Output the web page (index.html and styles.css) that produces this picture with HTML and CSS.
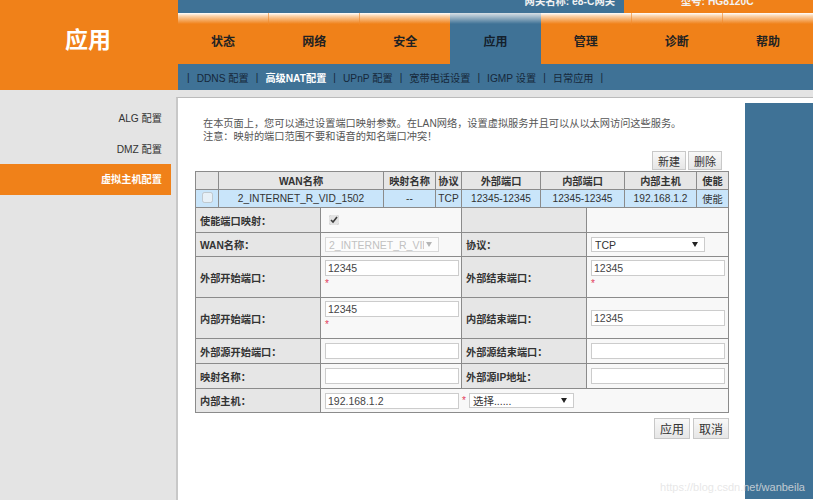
FILE: index.html
```html
<!DOCTYPE html>
<html lang="zh-CN">
<head>
<meta charset="utf-8">
<title>应用</title>
<link rel="stylesheet" href="styles.css">
</head>
<body>
<div class="page">
  <header class="header">
    <div class="brand">应用</div>
    <div class="head-right">
      <div class="topbar">
        <div class="gw">网关名称: e8-C网关</div>
        <div class="model">型号: HG8120C</div>
      </div>
      <nav class="tabs">
        <a class="tab">状态</a><a class="tab">网络</a><a class="tab">安全</a><a class="tab active">应用</a><a class="tab">管理</a><a class="tab">诊断</a><a class="tab">帮助</a>
      </nav>
      <div class="subnav">
        <span class="sep">|</span><span>DDNS 配置</span><span class="sep">|</span><span class="cur">高级NAT配置</span><span class="sep">|</span><span>UPnP 配置</span><span class="sep">|</span><span>宽带电话设置</span><span class="sep">|</span><span>IGMP 设置</span><span class="sep">|</span><span>日常应用</span><span class="sep">|</span>
      </div>
    </div>
  </header>
  <div class="body">
    <aside class="side">
      <div class="side-item">ALG 配置</div>
      <div class="side-item">DMZ 配置</div>
      <div class="side-item on">虚拟主机配置</div>
    </aside>
    <main class="main">
      <div class="intro">
        <p>在本页面上，您可以通过设置端口映射参数。在LAN网络，设置虚拟服务并且可以从以太网访问这些服务。</p>
        <p>注意：映射的端口范围不要和语音的知名端口冲突！</p>
      </div>
      <div class="btns top-btns"><button class="btn">新建</button><button class="btn">删除</button></div>
      <table class="list">
        <colgroup><col class="c1"><col class="c2"><col class="c3"><col class="c4"><col class="c5"><col class="c6"><col class="c7"><col class="c8"></colgroup>
        <tr><th></th><th>WAN名称</th><th>映射名称</th><th>协议</th><th>外部端口</th><th>内部端口</th><th>内部主机</th><th>使能</th></tr>
        <tr class="sel"><td><input type="checkbox" class="chk" disabled></td><td>2_INTERNET_R_VID_1502</td><td>--</td><td>TCP</td><td>12345-12345</td><td>12345-12345</td><td>192.168.1.2</td><td>使能</td></tr>
      </table>
      <table class="form">
        <colgroup><col class="f1"><col class="f2"><col class="f3"><col class="f4"></colgroup>
        <tr class="r25"><th>使能端口映射：</th><td class="chkcell"><input type="checkbox" class="chk2" checked></td><th></th><td></td></tr>
        <tr class="r24"><th>WAN名称：</th><td><select class="sel-wan" disabled><option>2_INTERNET_R_VID_1502</option></select></td><th>协议：</th><td><select class="sel-proto"><option>TCP</option></select></td></tr>
        <tr class="r41"><th>外部开始端口：</th><td class="top"><input class="txt" value="12345"><div class="req">*</div></td><th>外部结束端口：</th><td class="top"><input class="txt" value="12345"><div class="req">*</div></td></tr>
        <tr class="r41"><th>内部开始端口：</th><td class="top"><input class="txt" value="12345"><div class="req">*</div></td><th>内部结束端口：</th><td><input class="txt" value="12345"></td></tr>
        <tr class="r25"><th>外部源开始端口：</th><td><input class="txt"></td><th>外部源结束端口：</th><td><input class="txt"></td></tr>
        <tr class="r25"><th>映射名称：</th><td><input class="txt"></td><th>外部源IP地址：</th><td><input class="txt"></td></tr>
        <tr class="r24"><th>内部主机：</th><td colspan="3"><div class="host"><input class="txt host-ip" value="192.168.1.2"><span class="req">*</span><select class="sel-host"><option>选择......</option></select></div></td></tr>
      </table>
      <div class="btns bot-btns"><button class="btn big">应用</button><button class="btn big">取消</button></div>
    </main>
    <div class="rail"></div>
  </div>
  <div class="mark">https://blog.csdn.net/wanbeila</div>
</div>
</body>
</html>
```
FILE: styles.css
```css
* { box-sizing: border-box; }
html, body { margin: 0; padding: 0; }
body { font-family: "Liberation Sans", "Noto Sans CJK SC", sans-serif; font-size: 10.2px; color: #333; background: #fff; }
.page { position: relative; width: 813px; height: 500px; overflow: hidden; }

.header { display: flex; height: 90px; }
.brand { width: 178px; background: #f08119; color: #fff; font-size: 23px; font-weight: 700; padding: 24px 0 0 65px; line-height: 32px; }
.head-right { flex: 1; display: flex; flex-direction: column; }
.topbar { display: flex; height: 13px; overflow: hidden; background: #3f7296; color: #f2f2f2; font-size: 10.3px; font-weight: 700; line-height: 3px; }
.gw { width: 446px; text-align: right; padding-right: 9px; }
.model { flex: 1; background: #f08119; padding-left: 57px; }
.tabs { display: flex; height: 51px; }
.tab { flex: 1; display: flex; align-items: center; justify-content: center; padding-top: 4px; font-size: 12px; font-weight: 700; color: #222; background: linear-gradient(#fff 0, #fbd3ab 3px, #f08119 11px); border-left: 1px solid; border-image: linear-gradient(#f6b880, #f08119 25%) 1; }
.tab:first-child { border-left: 0; }
.tab.active { background: linear-gradient(#d8e0e6 0, #3f7296 11px); color: #14202c; border-left: 0; }
.tab.active + .tab { border-left: 0; }
.subnav { height: 26px; background: #3f7296; display: flex; align-items: center; gap: 7px; padding-left: 9px; color: #16283a; font-size: 10.2px; }
.subnav .cur { color: #fff; font-weight: 700; }

.body { display: flex; height: 410px; background: #e4e4e4; }
.side { width: 176px; padding-top: 15px; }
.side-item { height: 31px; line-height: 28px; text-align: right; padding-right: 14px; font-size: 10.2px; color: #333; }
.side-item.on { width: 171px; height: 31px; margin-top: -3px; line-height: 32px; background: #f08119; color: #fff; font-weight: 700; padding-right: 9px; }
.main { width: 569px; margin-top: 7px; padding: 0 0 0 17px; background: #fff; border-left: 2px solid #c8c8c8; border-top: 1px solid #bbb; position: relative; }
.rail { flex: 1; margin-top: 7px; background: #fff; border-top: 1px solid #bbb; }
.rail::before { content: ""; display: block; height: 396px; margin-top: 5px; background: #3f7296; }

.intro { padding: 19px 0 0 8px; color: #555; font-size: 10.2px; line-height: 13px; }
.intro p { margin: 0; }

.btns { display: flex; justify-content: flex-end; gap: 2px; }
.top-btns { margin-top: 8px; width: 527px; height: 20px; }
.btn { height: 19px; padding: 0 5px; border: 1px solid #c8c8c8; background: linear-gradient(#f8f8f8, #e6e6e6); font: 11px "Liberation Sans", "Noto Sans CJK SC", sans-serif; color: #333; }

table { border-collapse: collapse; table-layout: fixed; width: 533px; }
.list th, .list td { border: 1px solid #8b8b8b; text-align: center; padding: 0; height: 18px; font-size: 10.2px; color: #333; }
.list th { background: #e6e6e6; font-weight: 700; }
.sel td { background: #c9e5fa; }
.c1 { width: 23px; } .c2 { width: 165px; } .c3 { width: 52px; } .c4 { width: 26px; } .c5 { width: 79px; } .c6 { width: 84px; } .c7 { width: 72px; } .c8 { width: 32px; }
.chk { width: 11px; height: 11px; margin: 0; }

.form { border: 1px solid #666; width: 533px; margin-top: -1px; }
.f1 { width: 125px; } .f2 { width: 141px; } .f3 { width: 125px; } .f4 { width: 142px; }
.form th, .form td { border: 1px solid #8b8b8b; padding: 0 4px; font-size: 10.2px; color: #333; }
.form th { background: #e6e6e6; text-align: left; font-weight: 700; }
.form td { background: #f8f8f8; }
.form td.top { vertical-align: top; padding-top: 3px; }
.r25 { height: 25px; } .r24 { height: 24px; } .r41 { height: 41px; }
.txt { display: block; width: 134px; height: 16px; margin: 0; padding: 0 2px; border: 1px solid #ccc; background: #fff; font: 10.5px "Liberation Sans", sans-serif; color: #444; }
.req { color: #e23a5a; font-size: 10px; line-height: 16px; height: 16px; }
.chkcell { padding-left: 8px !important; }
.chk2 { width: 10px; height: 10px; margin: 0; display: block; accent-color: #e2e2e2; }
.sel-wan, .sel-proto, .sel-host { appearance: none; border: 1px solid #ccc; background-color: #fff; background-repeat: no-repeat; background-position: right 6px center; background-size: 6px 5px; background-image: url("data:image/svg+xml,%3Csvg xmlns='http://www.w3.org/2000/svg' viewBox='0 0 6 5'%3E%3Cpath d='M0 0h6L3 5z' fill='%23222'/%3E%3C/svg%3E"); border-radius: 0; padding: 0 14px 0 3px; }
.sel-wan { width: 114px; height: 15px; font: 10.5px "Liberation Sans", sans-serif; color: #aaa; background-image: url("data:image/svg+xml,%3Csvg xmlns='http://www.w3.org/2000/svg' viewBox='0 0 6 5'%3E%3Cpath d='M0 0h6L3 5z' fill='%23999'/%3E%3C/svg%3E"); }
.sel-proto { width: 114px; height: 15px; font: 10.5px "Liberation Sans", sans-serif; color: #333; }
.host { display: flex; align-items: center; gap: 3px; }
.host .req { height: auto; }
.host-ip { flex: none; }
.sel-host { width: 105px; height: 15px; font: 10.5px "Liberation Sans", "Noto Sans CJK SC", sans-serif; color: #333; }

.bot-btns { margin-top: 5px; width: 534px; gap: 3px; }
.btn.big { height: 21px; padding: 0 5px; font-size: 12px; }

.mark { position: absolute; right: 8px; top: 481px; font-size: 11px; color: rgba(225,225,225,.8); }
```
